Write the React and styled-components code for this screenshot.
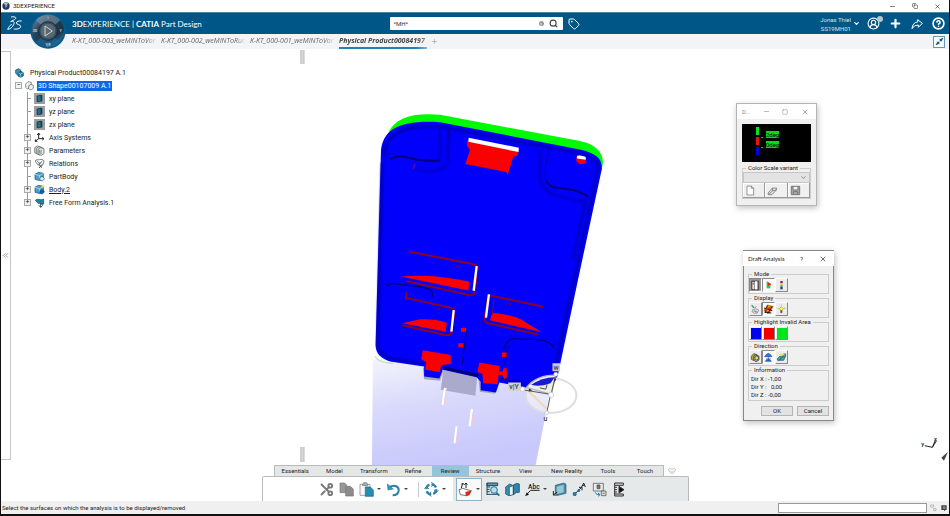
import React from 'react'
import styled, { createGlobalStyle } from 'styled-components';
import { Search, Tag, Plus, Minus, X, Square, Copy, ChevronDown, ChevronsLeft, CircleHelp, CircleUserRound, Scissors } from 'lucide-react';

const GlobalStyle = createGlobalStyle`
    * {
        box-sizing: border-box;
    }
    body {
        margin: 0;
        font-family: Roboto, 'Noto Sans', sans-serif;
        font-size: 6px;
        color: #222;
        background: #fff;
    }
    button, input, select {
        font: inherit;
        color: inherit;
        margin: 0;
        padding: 0;
        border: 0;
        background: none;
    }
    ul {
        list-style: none;
        margin: 0;
        padding: 0;
    }
    svg {
        display: block;
    }
`

const treeItems = [
    { name: 'xy plane', icon: 'plane' },
    { name: 'yz plane', icon: 'plane' },
    { name: 'zx plane', icon: 'plane' },
    { name: 'Axis Systems', icon: 'axis', open: true },
    { name: 'Parameters', icon: 'params', open: true },
    { name: 'Relations', icon: 'relations', open: true },
    { name: 'PartBody', icon: 'body' },
    { name: 'Body.2', icon: 'bodyActive', open: true, current: true },
    { name: 'Free Form Analysis.1', icon: 'analysis', open: true },
]

const documents = ['K-KT_000-003_weMINToVor', 'K-KT_000-002_weMINToRuc', 'K-KT_000-001_weMINToVor']

const sections = ['Essentials', 'Model', 'Transform', 'Refine', 'Review', 'Structure', 'View', 'New Reality', 'Tools', 'Touch']

const TreeIcon = ({ type }) => {
    if (type === 'plane') {
        return (
            <svg width="11" height="11" viewBox="0 0 33 33">
                <rect width="33" height="33" fill="#9b9da0" />
                <path d="M8 8 L20 5 L25 7 V25 L13 28 L8 26Z" fill="#0e3d50" />
                <path d="M11 10 L20 8 V24 L11 26Z" fill="#2c6c80" />
            </svg>
        )
    }
    if (type === 'axis') {
        return (
            <svg width="11" height="11" viewBox="0 0 33 33" fill="none" stroke="#222" strokeWidth="3">
                <path d="M14 20 V5 M10 9 L14 3 L18 9 M14 20 L4 28 M4 22 V28 H10 M14 20 H29 M25 16 L30 20 L25 24" />
            </svg>
        )
    }
    if (type === 'params') {
        return (
            <svg width="11" height="11" viewBox="0 0 33 33" stroke="#4b5553" strokeWidth="2" fill="#dfe5e2">
                <path d="M2 8 L10 3 L20 6 V23 L12 27 L2 23Z" />
                <path d="M7 10 L15 5 L25 8 V25 L17 30 L7 26Z" />
                <path d="M12 13 L20 8 L30 11 V26 L22 31 L12 27Z M16 15 V25 M21 15 V27" />
            </svg>
        )
    }
    if (type === 'relations') {
        return (
            <svg width="11" height="11" viewBox="0 0 33 33" fill="none" stroke="#3f4444" strokeWidth="2">
                <path d="M3 9 C8 2 14 7 18 5 S28 4 30 9 L27 20 L20 26 M3 9 L13 22 L19 12 M8 8 L17 16 M25 8 L16 20" />
                <path d="M14 19 L24 29 M24 19 L15 30" strokeWidth="3" />
            </svg>
        )
    }
    if (type === 'analysis') {
        return (
            <svg width="11" height="11" viewBox="0 0 33 33">
                <path d="M4 10 C11 2 18 12 29 6 V21 C22 26 17 16 13 20 Z" fill="#23809b" stroke="#0c4d68" strokeWidth="2" />
                <path d="M20 18 V31 M15 25 L20 31 L26 25" stroke="#3d5057" strokeWidth="3" fill="none" />
            </svg>
        )
    }
    if (type === 'shape') {
        return (
            <svg width="9" height="10" viewBox="0 0 27 30" fill="#eef0f0" stroke="#59636a" strokeWidth="2">
                <path d="M2 9 L9 2 L19 4 V10 L12 14 V22 L7 24 L2 19Z" />
                <path d="M12 14 L18 10 L25 13 V22 L18 27 L10 23 Z" />
            </svg>
        )
    }
    if (type === 'product') {
        return (
            <svg width="9" height="10" viewBox="0 0 27 30" stroke="#0b3f61" strokeWidth="2">
                <path d="M2 6 L11 2 L17 6 V17 L8 21 L2 16Z" fill="#3d96b8" />
                <path d="M9 14 L18 10 L25 14 V24 L16 28 L9 24Z" fill="#237ba4" />
                <path d="M9 14 L16 18 L25 14 M16 18 V27" fill="none" stroke="#a5dcec" />
            </svg>
        )
    }
    return (
        <svg width="11" height="11" viewBox="0 0 33 33" strokeWidth="2">
            <path d="M3 10 L13 4 L28 7 V22 L18 29 L3 25Z" fill="#4b9fc0" stroke="#174f70" />
            <path d="M3 10 L17 14 L28 7 M17 14 V28" fill="none" stroke="#d1edf4" />
            <path d="M18 20 C23 14 31 18 31 24 L25 30 L17 27Z" fill={type === 'bodyActive' ? '#1457bb' : '#d9edf3'} stroke="#174f70" />
            {type === 'bodyActive' && <path d="M27 0 L29 5 L33 7 L28 9 L26 13 L24 8 L20 6 L25 5Z" fill="#ffe13b" />}
        </svg>
    )
}

const Compass = () => (
    <svg width="36" height="36" viewBox="0 0 108 108" aria-hidden="true">
        <defs>
            <linearGradient id="dial" x1="0" y1="0" x2="1" y2="1">
                <stop offset="0" stopColor="#7893a8" />
                <stop offset="0.35" stopColor="#254359" />
                <stop offset="0.7" stopColor="#1d3346" />
                <stop offset="1" stopColor="#2aa0d8" />
            </linearGradient>
        </defs>
        <circle cx="54" cy="54" r="53" fill="#075a8c" />
        <circle cx="54" cy="54" r="48" fill="url(#dial)" />
        <path d="M17 22 A48 48 0 0 1 91 22 L74 36 A28 28 0 0 0 34 36Z" fill="#829bad" opacity="0.55" />
        <path d="M18 86 A48 48 0 0 0 90 86 L74 73 A28 28 0 0 1 34 73Z" fill="#176b9e" opacity="0.7" />
        <circle cx="54" cy="54" r="28" fill="#3c4e5c" stroke="#122c40" strokeWidth="3" />
        <circle cx="54" cy="54" r="22" fill="#5a6872" />
        <path d="M45 39 L67 54 L45 69Z" fill="none" stroke="#cad5da" strokeWidth="3" />
        <g fill="#c3d0d9" fontSize="11" fontWeight="700" textAnchor="middle">
            <text x="54" y="19">i</text>
            <text x="15" y="58">3D</text>
            <text x="92" y="58">Y</text>
            <text x="54" y="98">V,R</text>
        </g>
    </svg>
)

const DsLogo = () => (
    <svg width="15" height="15" viewBox="0 0 45 45" fill="none" stroke="#fff" strokeWidth="3" aria-hidden="true">
        <path d="M12 3 C23 1 30 4 25 9 C22 12 16 14 11 17 C19 13 24 18 20 26 C16 35 8 40 2 40 C4 34 10 28 14 24" />
        <path d="M44 15 C36 14 28 16 28 21 C28 26 42 25 41 32 C40 39 28 40 20 39" />
    </svg>
)

const Scene = () => (
    <SceneSvg viewBox="0 49 950 417" preserveAspectRatio="xMidYMax meet" role="img" aria-label="Part with draft analysis colors">
        <defs>
            <linearGradient id="mirror" x1="0" y1="0" x2="0.3" y2="1">
                <stop offset="0" stopColor="#f3f4fc" />
                <stop offset="0.45" stopColor="#d9d9fc" />
                <stop offset="1" stopColor="#c8c8fc" />
            </linearGradient>
            <filter id="soft" x="-10%" y="-10%" width="120%" height="120%">
                <feGaussianBlur stdDeviation="3" />
            </filter>
        </defs>
        <path d="M300 50h4v14h-4z M300 448h4v15h-4z" fill="#dadada" />
        <path d="M300 50h1v14h-1z M303 50h1v14h-1z M300 448h1v15h-1z M303 448h1v15h-1z" fill="#bdbdbd" />
        <g transform="translate(360 240) scale(0.3333)">
            <path d="M38 362 C120 350 470 430 572 455 L527 680 H35Z" fill="url(#mirror)" />
            <path d="M250 392 L352 412 L346 470 L242 452Z" fill="#a9aacc" />
            <path d="M355 418 L420 430 L404 464 L360 458Z M188 385 L250 395 L240 425 L192 420Z" fill="#a3a6b0" />
            <path d="M255 446 L248 497 M336 510 L329 562 M290 562 L284 612" stroke="#fff" strokeWidth="7" />
            <path d="M259 446 L252 497 M341 510 L334 562 M294 562 L288 612" stroke="#f5c9cf" strokeWidth="3" />
            <path d="M44 352 Q58 372 100 372" stroke="#b9e8b9" strokeWidth="4" fill="none" />
        </g>
        <g transform="translate(360 100) scale(0.3333)">
            <path d="M85 98 C105 55 155 38 240 45 L660 124 C705 133 729 155 730 188 L726 212 L600 170 L240 80Z" fill="#00fb00" />
            <path
                d="M62 160 C64 85 125 60 240 67 L660 149 C710 160 730 178 726 210 L655 540 L597 815 Q588 862 560 868 L500 866 L418 850 L408 880 L362 873 V848 L350 834 L248 812 L238 838 L192 832 V802 L90 787 C60 778 45 760 46 735 Z"
                fill="#0000fb"
            />
            <g fill="none" stroke="#0000a8" strokeWidth="7" filter="url(#soft)">
                <path d="M72 170 C74 100 130 76 240 80 L655 160 C705 170 718 190 714 212 L643 540 L585 810" />
                <path d="M66 190 L53 735 Q58 768 95 778 L190 794 M420 840 L490 852" />
                <path d="M240 88 Q242 150 236 178 M165 208 Q250 226 262 190 L267 90 M540 150 V230 Q544 280 600 290 L680 310 M680 290 L640 480" strokeWidth="5" />
            </g>
            <g fill="none" stroke="#000078" strokeWidth="4" strokeLinecap="round">
                <path d="M92 177 Q112 164 145 174 Q195 187 238 182 M558 242 Q568 266 600 265 Q650 269 682 288" strokeWidth="6" />
                <path d="M265 92 L261 150 M567 148 Q550 220 558 242" stroke="#0000a8" strokeWidth="3" />
                <path d="M82 560 Q88 548 120 555 L185 563 Q225 571 216 592 M432 750 Q440 716 465 718 L540 722 Q575 728 582 746" />
                <path d="M320 695 L306 795 M445 740 L435 795" strokeWidth="3" />
            </g>
            <path d="M322 122 L476 152 L473 167 L460 171 L452 198 L443 226 L439 217 L316 193 L330 150 L321 138Z" fill="#fa0000" />
            <path d="M326 114 L477 144 L476 157 L325 126Z" fill="#fff" />
            <path d="M650 170 Q665 164 679 174 L677 190 Q663 198 650 185Z" fill="#fa0000" />
            <path d="M652 168 Q665 165 678 172 V180 L652 176Z" fill="#fff" />
            <path d="M159 208 L163 193" stroke="#a00040" strokeWidth="4" />
        </g>
        <g transform="translate(360 240) scale(0.3333)">
            <g fill="none" stroke="#90001c" strokeWidth="6">
                <path d="M146 36 L345 75 L353 82 L344 160 Q340 168 324 166 L138 125" />
                <path d="M140 158 L137 175 L278 207 L284 214 L274 280 Q270 290 255 287 L125 258" />
                <path d="M550 202 L385 167 L374 238 Q373 249 385 252 L535 286" />
                <path d="M288 82 Q296 75 304 86 M229 210 Q236 204 240 212 M438 195 Q446 188 453 197" strokeWidth="3" />
            </g>
            <g fill="#fa0000">
                <path d="M122 111 C190 106 240 108 328 127 L325 153 Z" />
                <path d="M126 252 L180 240 Q225 238 260 250 L257 277Z" />
                <path d="M397 220 C440 224 470 232 490 244 L544 278 L390 243Z" />
                <path d="M188 333 L272 347 V374 L245 377 L238 399 L195 391 L198 369 L183 359Z" />
                <path d="M358 370 L419 380 L413 435 L370 432 L367 404 L352 398Z" />
                <path d="M303 266 H318 V277 H303Z M295 312 H310 V325 H295Z M426 340 H440 V353 H426Z M415 397 L428 396 L432 385 L441 388 V414 L433 420 L428 408 L415 408Z" />
            </g>
            <path d="M350 80 L341 154 M281 212 L274 277 M387 165 L378 235" stroke="#fff" strokeWidth="7" />
            <path d="M402 182 L397 225" stroke="#900030" strokeWidth="3" />
            <path d="M250 386 L355 409" stroke="#000078" strokeWidth="9" />
            <g fill="none">
                <ellipse cx="574" cy="469" rx="76" ry="52" fill="#ffffff" fillOpacity="0.5" stroke="#dedede" strokeWidth="6" />
                <path d="M500 445 Q530 407 588 408 L574 466Z" fill="#eeeee9" stroke="#b5b8bd" strokeWidth="4" />
                <path d="M514 437 Q545 415 585 414 L572 432 Q540 444 514 437Z" fill="#171ad4" />
                <path d="M505 455 L562 510" stroke="#f2d8bd" strokeWidth="7" />
                <path d="M574 466 L588 406 M574 466 L490 452 M572 468 L561 520" stroke="#555b57" strokeWidth="3" />
                <path d="M540 446 L558 450 L562 436" stroke="#444" strokeWidth="3" />
                <path d="M582 430 L584 416 L590 420Z M518 453 L507 448 L507 457Z" fill="#333" />
            </g>
            <rect x="578" y="372" width="23" height="24" fill="#c7c8d0" />
            <rect x="445" y="430" width="38" height="25" fill="#d2d2d7" />
            <g fill="#fff" stroke="#bbb" strokeWidth="2">
                <circle cx="574" cy="467" r="8" />
                <circle cx="488" cy="450" r="7" />
                <circle cx="561" cy="521" r="6" />
                <circle cx="588" cy="405" r="6" />
            </g>
            <g fill="#3d3f42" fontSize="21" fontWeight="500">
                <text x="581" y="391">w</text>
                <text x="448" y="449">v|Y</text>
                <text x="551" y="546">u</text>
            </g>
        </g>
    </SceneSvg>
)

const toolIcons = {
    copy: (
        <g stroke="#777" strokeWidth="2" fill="#989898">
            <path d="M3 3 H17 L23 9 V32 H3Z" />
            <path d="M20 13 H34 L43 21 V42 H20Z" fill="#8b8b8b" />
        </g>
    ),
    paste: (
        <g strokeWidth="2">
            <path d="M3 7 H33 V40 H3Z" fill="#f6f6f6" stroke="#777" />
            <path d="M11 7 L14 2 H23 L26 7 V11 H11Z" fill="#aaa" stroke="#777" />
            <path d="M19 15 H34 L43 24 V43 H19Z" fill="#248db2" stroke="#116489" />
        </g>
    ),
    undo: (
        <g fill="none" stroke="#267fa5" strokeWidth="6">
            <path d="M9 16 C27 6 39 14 38 26 C37 35 30 40 20 40" />
            <path d="M4 6 L6 24 L22 21Z" fill="#3298bd" strokeWidth="2" />
        </g>
    ),
    update: (
        <g fill="none" stroke="#2c83ac" strokeWidth="7">
            <circle cx="22" cy="22" r="15" strokeDasharray="17 6" />
            <path d="M22 1 L30 7 L22 14 M43 25 L36 32 L31 23 M22 43 L14 37 L22 30 M1 20 L8 13 L14 21" strokeWidth="3" />
        </g>
    ),
    draft: (
        <g strokeWidth="2">
            <path d="M3 23 L14 19 L38 26 L27 41 L7 38Z" fill="#fff" stroke="#333" />
            <path d="M22 30 L42 25 L34 40 L24 43Z" fill="#db291e" />
            <path d="M10 18 L14 4 M10 7 L14 3 L18 8 M24 18 V3 M19 8 L24 3 L28 8" stroke="#222" fill="none" strokeWidth="3" />
        </g>
    ),
    inspect: (
        <g strokeWidth="3" stroke="#174a63" fill="none">
            <path d="M6 3 H38 V11 H6Z M6 15 H16 M6 22 H14 M6 29 H14 M6 37 H36" fill="#6c99aa" />
            <path d="M6 3 V39" />
            <circle cx="27" cy="24" r="10" fill="#b9dcea" stroke="#2175a3" />
            <path d="M34 32 L43 41" stroke="#2175a3" strokeWidth="6" />
        </g>
    ),
    section: (
        <g strokeWidth="2" stroke="#173b4e">
            <path d="M2 15 L14 6 L23 10 V37 L12 41 L2 36Z" fill="#388fb4" />
            <path d="M13 16 L25 10 V38 L13 41Z" fill="#f0f4f5" />
            <path d="M25 9 Q36 1 43 6 V31 Q35 29 25 38Z" fill="#2b86ae" />
        </g>
    ),
    text: (
        <g>
            <path d="M2 40 L17 25 H44" fill="none" stroke="#222" strokeWidth="3" />
            <path d="M1 42 L5 31 L12 38Z" fill="#111" />
            <text x="9" y="21" fontSize="20" fontWeight="500" fill="#111">Abc</text>
        </g>
    ),
    views: (
        <g strokeWidth="2">
            <path d="M10 10 L36 3 L42 7 V34 L18 40 L10 34Z" fill="#478eaa" stroke="#25556b" />
            <path d="M14 14 L35 8 V31 L14 36Z" fill="#98c6d6" />
            <path d="M4 27 V39 H17 M4 39 L16 30" fill="none" stroke="#222" strokeWidth="3" />
        </g>
    ),
    link: (
        <g fill="none" stroke="#222" strokeWidth="3">
            <path d="M8 36 L29 16 M21 16 H30 V25 M29 15 L35 3 L40 15 M32 10 H38" />
            <path d="M4 32 H12 V40 H4Z M18 23 H23 V28 H18Z" fill="#3183bd" stroke="#256491" />
        </g>
    ),
    capture: (
        <g fill="none" stroke="#444" strokeWidth="2">
            <path d="M4 4 H34 V27 H4Z" fill="#e9ebec" />
            <path d="M15 9 H24 V20 H15Z" fill="#777" />
            <path d="M10 31 Q12 39 22 38 M18 33 L24 38 L18 43" stroke="#1683b9" strokeWidth="3" />
            <path d="M28 27 H42 V41 H28Z M32 34 H38" fill="#ddd" />
        </g>
    ),
    play: (
        <g stroke="#333" strokeWidth="3" fill="#d0d5d7">
            <path d="M8 3 H34 V10 H8Z M8 36 H34 V42 H8Z M8 10 V36 M8 16 H15 M8 23 H15 M8 30 H15" />
            <path d="M21 13 L36 23 L21 33Z" fill="#111" />
        </g>
    ),
}

const ToolIcon = ({ name }) => (
    <svg width="15" height="15" viewBox="0 0 45 45" aria-hidden="true">{toolIcons[name]}</svg>
)

const Tool = ({ name, label, menu, active }) => (
    <ToolButton type="button" aria-label={label} $active={active}>
        {name === 'cut' ? <CutIcon size={15} color="#777" strokeWidth={3} /> : <ToolIcon name={name} />}
        {menu && <Caret />}
    </ToolButton>
)

const dialogIcons = {
    scale: (
        <g>
            <path d="M5 3 H26 V29 H5Z" fill="#777" stroke="#333" strokeWidth="2" />
            <path d="M7 6 H13 V27 H7Z" fill="#ddd" />
            <path d="M15 4 H22 V28 H15Z" fill="#fff" />
            <path d="M8 8 H11 V14 H8Z" fill="#c33" />
        </g>
    ),
    quick: (
        <g>
            <path d="M11 5 V24 L16 24 V5Z" fill="#28bd48" />
            <path d="M15 7 Q24 9 25 16 L15 18Z" fill="#ed2020" />
            <path d="M12 18 H22 V25 H12Z" fill="#2ac953" />
        </g>
    ),
    full: (
        <g>
            <path d="M13 3 H20 V10 H13Z" fill="#8d251e" />
            <path d="M13 10 H20 V15 H13Z" fill="#f2cc24" />
            <path d="M13 15 H20 V20 H13Z" fill="#38adca" />
            <path d="M13 20 H20 V28 H13Z" fill="#183c86" />
        </g>
    ),
    fly: (
        <g fill="none" stroke="#77738b" strokeWidth="2">
            <path d="M8 17 Q15 11 26 18 L22 27 Q12 31 6 23Z M10 22 H22 M13 17 L19 27" />
            <path d="M5 4 L12 11" stroke="#24a66a" strokeWidth="4" />
            <path d="M18 8 L14 12" stroke="#e12e40" strokeWidth="3" />
        </g>
    ),
    noHighlight: (
        <g fill="none" strokeWidth="4">
            <path d="M4 19 L15 4 L29 8 L18 27Z" fill="#ef9d17" stroke="#e07917" />
            <path d="M3 12 L28 20 M13 4 L7 27 M28 6 L14 29 M4 24 L25 27" stroke="#28160c" strokeWidth="3" />
            <path d="M9 15 L24 11" stroke="#e92a20" />
        </g>
    ),
    light: (
        <g fill="none" stroke="#9c9531" strokeWidth="2">
            <path d="M16 8 L22 14 L18 20 H14 L10 14Z" fill="#ffff38" />
            <path d="M16 2 V5 M5 13 H8 M24 13 H28" />
            <path d="M14 20 H18 V26 H14Z" fill="#555" stroke="#555" />
        </g>
    ),
    lock: (
        <g fill="#b6ad3d" stroke="#333" strokeWidth="2">
            <path d="M4 13 L11 5 L21 8 V20 L12 26 L4 22Z" />
            <path d="M11 13 L16 9 L27 12 V24 L18 30 L11 24Z" fill="#aaa" />
            <circle cx="20" cy="18" r="6" fill="#dfd46a" />
        </g>
    ),
    compass: (
        <g fill="#3576d6" stroke="#174eaa" strokeWidth="2">
            <path d="M5 14 Q9 6 16 4 Q23 6 27 14Z M16 14 V27 M9 21 H23 M7 28 L11 23 H21 L25 28Z" />
        </g>
    ),
    reverse: (
        <g strokeWidth="2">
            <path d="M4 20 L12 12 H29 L23 25 H5Z" fill="#36a4ad" stroke="#205766" />
            <path d="M9 8 L16 4 L21 8 L16 13Z" fill="#f7e13b" />
            <path d="M7 27 L29 6 M22 6 H29 V12" fill="none" stroke="#35413c" />
        </g>
    ),
    page: <path d="M6 3 H19 L26 10 V30 H6Z M19 3 V10 H26" fill="#fff" stroke="#666" strokeWidth="2" />,
    eraser: <path d="M3 24 L16 9 L29 9 L28 15 L15 29 H4Z M16 9 L17 17 L4 29 M17 17 L28 15" fill="#ddd" stroke="#666" strokeWidth="2" />,
    save: <path d="M4 4 H29 V29 H4Z M9 4 V15 H24 V4 M10 29 V20 H23 V29" fill="#aaa" stroke="#777" strokeWidth="3" />,
}

const DialogIcon = ({ name }) => (
    <svg width="11" height="11" viewBox="0 0 33 33" aria-hidden="true">{dialogIcons[name]}</svg>
)

const modes = [
    { title: 'Mode', tools: [['scale', true, 'Color scale'], ['quick', true, 'Quick'], ['full', false, 'Full']] },
    { title: 'Display', tools: [['fly', false, 'On the fly'], ['noHighlight', true, 'No highlight'], ['light', false, 'Light effect']] },
    { title: 'Highlight Invalid Area', colors: [['#0000f0', 'Blue'], ['#f00000', 'Red'], ['#00e51b', 'Green']] },
    { title: 'Direction', tools: [['lock', false, 'Lock direction'], ['compass', true, 'Compass'], ['reverse', false, 'Inverse']] },
]

const App = () => {
    return (
        <>
            <GlobalStyle />
            <Window>
                <TitleBar>
                    <svg width="8" height="8" viewBox="0 0 24 24" aria-hidden="true">
                        <circle cx="12" cy="12" r="11" fill="#243c59" />
                        <path d="M4 6 A10 10 0 0 1 18 4 L14 10Z" fill="#bac3d0" />
                        <path d="M10 8 L17 12 L10 17Z" fill="#9db0c8" />
                    </svg>
                    <span>3DEXPERIENCE</span>
                    <WindowControls>
                        <button type="button" aria-label="Minimize"><Minus size={7} /></button>
                        <button type="button" aria-label="Restore"><Copy size={6} /></button>
                        <button type="button" aria-label="Close"><X size={7} /></button>
                    </WindowControls>
                </TitleBar>
                <TopBar>
                    <Brand>
                        <DsLogo />
                        <CompassButton type="button" aria-label="Compass"><Compass /></CompassButton>
                        <BrandName><b>3D</b>EXPERIENCE | <b>CATIA</b> Part Design</BrandName>
                    </Brand>
                    <SearchBox>
                        <input aria-label="Search" defaultValue="*MH*" />
                        <ClearButton type="button" aria-label="Clear search"><X size={4} /></ClearButton>
                        <button type="button" aria-label="Search"><Search size={9} strokeWidth={3} color="#444" /></button>
                    </SearchBox>
                    <Actions>
                        <button type="button" aria-label="Tags"><Tag size={12} /></button>
                        <UserInfo>
                            <span>Jonas Thiel</span>
                            <span>SS19MH01</span>
                        </UserInfo>
                        <button type="button" aria-label="Account menu"><ChevronDown size={7} strokeWidth={4} /></button>
                        <Avatar type="button" aria-label="Profile"><CircleUserRound size={13} /></Avatar>
                        <button type="button" aria-label="Add"><Plus size={13} strokeWidth={4} /></button>
                        <button type="button" aria-label="Share">
                            <svg width="12" height="12" viewBox="0 0 36 36" fill="none" stroke="#fff" strokeWidth="3" strokeLinejoin="round">
                                <path d="M20 5 L34 16 L22 28 V21 Q10 20 3 32 Q5 13 20 12Z" />
                            </svg>
                        </button>
                        <button type="button" aria-label="Help"><CircleHelp size={13} strokeWidth={3} /></button>
                    </Actions>
                </TopBar>
                <DocumentTabs>
                    {documents.map((doc) => <DocumentTab type="button" key={doc}>{doc}</DocumentTab>)}
                    <DocumentTab type="button" $active>Physical Product00084197</DocumentTab>
                    <AddTab type="button" aria-label="New tab"><Plus size={7} /></AddTab>
                    <Collapse type="button" aria-label="Exit full screen">
                        <svg width="9" height="9" viewBox="0 0 27 27" fill="#0b5482">
                            <path d="M14 13 V4 L17 7 L22 2 L25 5 L20 10 L23 13Z M13 14 V23 L10 20 L5 25 L2 22 L7 17 L4 14Z" />
                        </svg>
                    </Collapse>
                </DocumentTabs>
                <Workspace>
                    <Viewport>
                        <Scene />
                        <SideRail>
                            <button type="button" aria-label="Collapse tree"><ChevronsLeft size={9} strokeWidth={2} color="#888" /></button>
                        </SideRail>
                        <Tree>
                            <TreeRow $level={0}><TreeIcon type="product" /><TreeName>Physical Product00084197 A.1</TreeName></TreeRow>
                            <TreeRow $level={1}>
                                <Expander type="button" aria-label="Collapse">−</Expander>
                                <TreeIcon type="shape" />
                                <TreeName $selected>3D Shape00107009 A.1</TreeName>
                            </TreeRow>
                            <li>
                                <Branch>
                                    {treeItems.map((item) => (
                                        <TreeRow $level={2} key={item.name}>
                                            {item.open ? <Expander type="button" aria-label="Expand">+</Expander> : <Twig />}
                                            <TreeIcon type={item.icon} />
                                            <TreeName $current={item.current}>{item.name}</TreeName>
                                        </TreeRow>
                                    ))}
                                </Branch>
                            </li>
                        </Tree>
                        <ScaleDialog aria-label="Draft">
                            <DialogTitle $muted>
                                <span>D...</span>
                                <button type="button" aria-label="Minimize"><Minus size={7} strokeWidth={2} /></button>
                                <button type="button" aria-label="Maximize"><Square size={6} strokeWidth={2} /></button>
                                <button type="button" aria-label="Close"><X size={8} strokeWidth={2} /></button>
                            </DialogTitle>
                            <ScaleView>
                                <ScaleBar>
                                    <ScaleColor $color="#00e51b" />
                                    <ScaleColor $color="#ed1010" />
                                    <ScaleColor $color="#0000e8" />
                                </ScaleBar>
                                <ScaleValues>
                                    <li><span>2deg</span></li>
                                    <li><span>0deg</span></li>
                                </ScaleValues>
                            </ScaleView>
                            <Group>
                                <legend>Color Scale variant</legend>
                                <SelectWrap>
                                    <select aria-label="Color Scale variant"><option></option></select>
                                    <ChevronDown size={7} color="#555" />
                                </SelectWrap>
                                <VariantButtons>
                                    <button type="button" aria-label="New"><DialogIcon name="page" /></button>
                                    <button type="button" aria-label="Delete"><DialogIcon name="eraser" /></button>
                                    <button type="button" aria-label="Save"><DialogIcon name="save" /></button>
                                </VariantButtons>
                            </Group>
                        </ScaleDialog>
                        <DraftDialog aria-label="Draft Analysis">
                            <DialogTitle>
                                <DialogName>Draft Analysis</DialogName>
                                <button type="button" aria-label="Help">?</button>
                                <button type="button" aria-label="Close"><X size={8} strokeWidth={2} /></button>
                            </DialogTitle>
                            {modes.map((group) => (
                                <Group key={group.title}>
                                    <legend>{group.title}</legend>
                                    <ButtonRow>
                                        {group.tools && group.tools.map(([icon, pressed, label]) => (
                                            <IconButton type="button" key={icon} aria-label={label} $pressed={pressed} $dark={icon === 'scale'}>
                                                <DialogIcon name={icon} />
                                            </IconButton>
                                        ))}
                                        {group.colors && group.colors.map(([color, label]) => (
                                            <IconButton type="button" key={color} aria-label={label}><Swatch $color={color} /></IconButton>
                                        ))}
                                    </ButtonRow>
                                </Group>
                            ))}
                            <Group>
                                <legend>Information</legend>
                                <Info>
                                    <span>Dir X : -1,00</span>
                                    <span>Dir Y : &nbsp; 0,00</span>
                                    <span>Dir Z : -0,00</span>
                                </Info>
                            </Group>
                            <DialogActions>
                                <button type="button">OK</button>
                                <button type="button">Cancel</button>
                            </DialogActions>
                        </DraftDialog>
                        <AxisMark width="30" height="30" viewBox="0 0 90 90" aria-hidden="true">
                            <path d="M17 38 L40 43 L49 22 M40 43 L52 24" fill="none" stroke="#222" strokeWidth="3" />
                            <path d="M87 56 L67 74 L75 83Z" fill="#444" />
                            <g fill="#222" fontSize="18" fontWeight="500">
                                <text x="7" y="39">y</text>
                                <text x="45" y="24">x</text>
                            </g>
                        </AxisMark>
                    </Viewport>
                    <Dock>
                        <SectionBar>
                            <SectionTabs>
                                {sections.map((name) => <SectionTab type="button" key={name} $active={name === 'Review'}>{name}</SectionTab>)}
                            </SectionTabs>
                            <button type="button" aria-label="More sections">
                                <svg width="8" height="8" viewBox="0 0 24 24" fill="none" stroke="#aaa" strokeWidth="2">
                                    <path d="M1 7 L6 3 L12 8 L18 3 L23 7 V11 L12 21 L1 11Z M4 9 L12 16 L20 9" />
                                </svg>
                            </button>
                        </SectionBar>
                        <ToolBar>
                            <ToolSet $light>
                                <Tool name="cut" label="Cut" />
                                <Tool name="copy" label="Copy" />
                                <Tool name="paste" label="Paste" menu />
                                <Tool name="undo" label="Undo" menu />
                                <Divider />
                                <Tool name="update" label="Update" menu />
                            </ToolSet>
                            <ToolSet>
                                <Tool name="draft" label="Draft Analysis" menu active />
                                <Tool name="inspect" label="Inspect" />
                                <Tool name="section" label="Section" />
                                <Tool name="text" label="Text" menu />
                                <Tool name="views" label="Views" />
                                <Tool name="link" label="Link" />
                                <Tool name="capture" label="Capture" />
                                <Tool name="play" label="Play" />
                            </ToolSet>
                        </ToolBar>
                    </Dock>
                </Workspace>
                <StatusBar>
                    <span>Select the surfaces on which the analysis is to be displayed/removed</span>
                    <input aria-label="Power input" />
                    <svg width="18" height="8" viewBox="0 0 54 24" aria-hidden="true">
                        <path d="M2 3 H11 V9 H2Z M11 14 H18 V20 H11Z" fill="#fff" stroke="#999" strokeWidth="2" />
                        <path d="M34 4 H50 V18 H46 L42 22 V18 H34Z" fill="#444" />
                        <path d="M39 7 H46 V15 H39Z" fill="#888" />
                    </svg>
                </StatusBar>
            </Window>
        </>
    )
}

const Window = styled.div`
    display: flex;
    flex-direction: column;
    min-height: 100vh;
    border: solid #111;
    border-width: 0 1px 2px;
`

const TitleBar = styled.header`
    display: flex;
    align-items: center;
    height: 12px;
    padding: 0 8px 0 1px;
    gap: 3px;
    line-height: 12px;
`

const WindowControls = styled.div`
    display: flex;
    align-items: center;
    gap: 16px;
    margin-left: auto;
`

const TopBar = styled.div`
    display: grid;
    grid-template-columns: 1fr 173px 1fr;
    align-items: center;
    height: 22px;
    padding-left: 2px;
    background: #005686;
    border-top: 1px solid #4b86aa;
    color: #fff;
`

const Brand = styled.div`
    display: flex;
    align-items: center;
    height: 21px;
    padding-left: 4px;
`

const CompassButton = styled.button`
    align-self: flex-start;
    position: relative;
    z-index: 2;
    margin: 0 6px 0 8px;
    height: 36px;
`

const BrandName = styled.h1`
    margin: 0;
    font-family: Lato, sans-serif;
    font-size: 8px;
    font-weight: 400;
    white-space: nowrap;
`

const SearchBox = styled.div`
    display: flex;
    align-items: center;
    gap: 5px;
    height: 13px;
    padding: 0 5px 0 4px;
    background: #fff;
    border-radius: 1px;
    color: #333;
    input {
        flex: 1;
        min-width: 0;
        outline: 0;
    }
`

const ClearButton = styled.button`
    display: grid;
    place-items: center;
    width: 5px;
    height: 5px;
    border-radius: 50%;
    background: #999;
    color: #fff;
`

const Actions = styled.div`
    display: flex;
    align-items: center;
    gap: 9px;
    padding: 0 4px 0 5px;
`

const UserInfo = styled.div`
    display: flex;
    flex-direction: column;
    align-items: flex-end;
    margin: 0 -7px 0 auto;
    line-height: 9px;
    color: #d3e3ed;
`

const Avatar = styled.button`
    position: relative;
    margin-left: -2px;
    &::after {
        content: '';
        position: absolute;
        top: -1px;
        right: -3px;
        width: 6px;
        height: 6px;
        border-radius: 50%;
        background: #b9c4cb;
    }
`

const DocumentTabs = styled.nav`
    display: flex;
    align-items: stretch;
    height: 15px;
    gap: 4px;
    padding: 0 4px 0 71px;
    background: #f2f4f7;
`

const DocumentTab = styled.button`
    width: ${(props) => (props.$active ? '88px' : '85px')};
    overflow: hidden;
    white-space: nowrap;
    text-align: left;
    font-family: 'Open Sans', 'Noto Sans', sans-serif;
    font-size: 7px;
    font-style: italic;
    font-weight: ${(props) => (props.$active ? 700 : 400)};
    color: ${(props) => (props.$active ? '#444' : '#666')};
    border-bottom: 2px solid ${(props) => (props.$active ? '#2382b5' : 'transparent')};
    mask-image: linear-gradient(to right, #000 88%, ${(props) => (props.$active ? '#0008' : 'transparent')});
`

const AddTab = styled.button`
    color: #999;
`

const Collapse = styled.button`
    display: grid;
    place-items: center;
    align-self: center;
    width: 12px;
    height: 12px;
    margin-left: auto;
    background: #fff;
    border: 1px solid #6795b5;
`

const Workspace = styled.main`
    display: flex;
    flex: 1;
    flex-direction: column;
`

const Viewport = styled.section`
    position: relative;
    display: flex;
    align-items: flex-start;
    flex: 1;
    min-height: 380px;
`

const SceneSvg = styled.svg`
    position: absolute;
    inset: 0;
    width: 100%;
    height: 100%;
`

const SideRail = styled.aside`
    display: flex;
    align-items: center;
    align-self: stretch;
    width: 10px;
    margin: 2px 0 5px;
    border: solid #c5c5c5;
    border-width: 1px 1px 1px 0;
`

const Tree = styled.ul`
    position: relative;
    padding: 17px 0 0 4px;
    font-size: 7px;
`

const Branch = styled.ul`
    background: linear-gradient(#999, #999) 12px 0 / 1px calc(100% - 6px) no-repeat;
`

const TreeRow = styled.li`
    display: flex;
    align-items: center;
    gap: ${(props) => (props.$level === 0 ? '5px' : '3px')};
    height: 13px;
    padding-left: ${(props) => (props.$level === 2 ? '9px' : '0')};
`

const TreeName = styled.span`
    line-height: 10px;
    padding: 0 1px;
    color: ${(props) => (props.$selected ? '#fff' : '#222')};
    background: ${(props) => (props.$selected ? '#0a68e8' : 'transparent')};
    text-decoration: ${(props) => (props.$current ? 'underline' : 'none')};
`

const Expander = styled.button`
    width: 7px;
    height: 7px;
    border: 1px solid #aaa;
    background: #f3f3f3;
    line-height: 5px;
    text-align: center;
`

const Twig = styled.i`
    width: 7px;
    height: 1px;
    background: linear-gradient(to right, transparent 50%, #999 50%);
`

const Dialog = styled.section`
    position: absolute;
    background: #f0f0f0;
    border: 1px solid #b5b5b5;
    box-shadow: 1px 2px 6px rgba(0, 0, 0, 0.25);
`

const ScaleDialog = styled(Dialog)`
    top: 54px;
    right: 132px;
    width: 81px;
    padding: 0 5px 6px;
`

const DraftDialog = styled(Dialog)`
    top: 201px;
    right: 115px;
    width: 91px;
    padding: 0 4px 4px;
    border-color: #888;
`

const DialogTitle = styled.header`
    display: flex;
    align-items: center;
    justify-content: space-between;
    height: 15px;
    margin: 0 -5px 4px;
    padding: 0 7px 0 5px;
    background: #fff;
    color: ${(props) => (props.$muted ? '#888' : '#222')};
`

const DialogName = styled.span`
    font-family: Lato, sans-serif;
`

const ScaleView = styled.div`
    display: flex;
    height: 38px;
    margin: 5px 0 2px;
    padding: 3px 0 0 14px;
    background: #000;
`

const ScaleBar = styled.div`
    display: flex;
    flex-direction: column;
    gap: 2px;
`

const ScaleColor = styled.i`
    width: 3px;
    height: 8px;
    background: ${(props) => props.$color};
`

const ScaleValues = styled.ul`
    padding: 4px 0 0 2px;
    line-height: 7px;
    li {
        display: flex;
        gap: 3px;
        margin-bottom: 3px;
        color: #000;
    }
    li::before {
        content: '';
        align-self: flex-end;
        width: 2px;
        height: 1px;
        background: #00cc18;
    }
    span {
        width: 13px;
        background: #00dd18;
    }
`

const Group = styled.fieldset`
    min-width: 0;
    margin: 0;
    padding: 0;
    border: 1px solid #ccc;
    legend {
        margin-left: 3px;
        padding: 0 2px;
        line-height: 8px;
    }
`

const SelectWrap = styled.label`
    display: flex;
    align-items: center;
    height: 11px;
    padding-right: 2px;
    background: #e3e3e3;
    border: 1px solid #c5c5c5;
    select {
        flex: 1;
        appearance: none;
    }
`

const VariantButtons = styled.div`
    display: grid;
    grid-template-columns: repeat(3, 1fr);
    button {
        height: 15px;
        padding-left: 2px;
        border: solid #999;
        border-width: 0 1px 1px 0;
        box-shadow: inset 1px 1px #fff;
    }
`

const ButtonRow = styled.div`
    display: flex;
    height: 15px;
`

const IconButton = styled.button`
    display: grid;
    place-items: center;
    width: 13px;
    height: 14px;
    background: ${(props) => (props.$dark ? '#999' : props.$pressed ? '#fafafa' : '#ececec')};
    border: 1px solid;
    border-color: ${(props) => (props.$pressed ? '#888 #fff #fff #888' : '#fff #888 #888 #fff')};
`

const Swatch = styled.i`
    width: 10px;
    height: 11px;
    background: ${(props) => props.$color};
`

const Info = styled.div`
    display: flex;
    flex-direction: column;
    padding: 1px 0 1px 2px;
    line-height: 8px;
`

const DialogActions = styled.div`
    display: flex;
    justify-content: flex-end;
    gap: 4px;
    padding-top: 5px;
    button {
        width: 32px;
        height: 10px;
        line-height: 8px;
        background: #e3e3e3;
        border: 1px solid #b5b5b5;
    }
`

const AxisMark = styled.svg`
    position: absolute;
    right: 0;
    bottom: 2px;
`

const Dock = styled.footer`
    display: flex;
    flex-direction: column;
    align-items: center;
    position: relative;
`

const SectionBar = styled.div`
    display: flex;
    align-items: center;
    gap: 4px;
`

const SectionTabs = styled.nav`
    display: flex;
    height: 11px;
    background: #e5e7e7;
    border: 1px solid #b8bbbc;
    border-bottom: 0;
    border-radius: 1px 1px 0 0;
`

const SectionTab = styled.button`
    padding: 0 7px;
    min-width: 37px;
    line-height: 10px;
    background: ${(props) => (props.$active ? '#94c5dc' : 'transparent')};
`

const ToolBar = styled.div`
    display: flex;
    height: 25px;
    border: 1px solid #b8bbbc;
    border-bottom: 0;
    border-radius: 2px 2px 0 0;
`

const ToolSet = styled.div`
    display: flex;
    align-items: center;
    gap: 3px;
    padding: ${(props) => (props.$light ? '0 6px 0 55px' : '0 60px 0 4px')};
    background: ${(props) => (props.$light ? '#fff' : '#e6e9e9')};
`

const ToolButton = styled.button`
    display: flex;
    align-items: center;
    gap: 3px;
    height: 21px;
    padding: 0 1px;
    background: ${(props) => (props.$active ? '#f8f9f9' : 'transparent')};
    outline: ${(props) => (props.$active ? '1px solid #8cb4c8' : 'none')};
`

const CutIcon = styled(Scissors)`
    transform: scaleX(-1);
`

const Caret = styled.i`
    border: 2px solid transparent;
    border-top-color: #444;
    border-bottom: 0;
`

const Divider = styled.i`
    width: 1px;
    height: 15px;
    margin: 0 1px 0 6px;
    background: #ccc;
`

const StatusBar = styled.footer`
    display: flex;
    align-items: center;
    height: 13px;
    gap: 3px;
    padding: 0 1px;
    background: #f0f0f0;
    span {
        flex: 1;
    }
    input {
        width: 149px;
        height: 10px;
        background: #fff;
        border: 1px solid #999;
    }
`

export default App
